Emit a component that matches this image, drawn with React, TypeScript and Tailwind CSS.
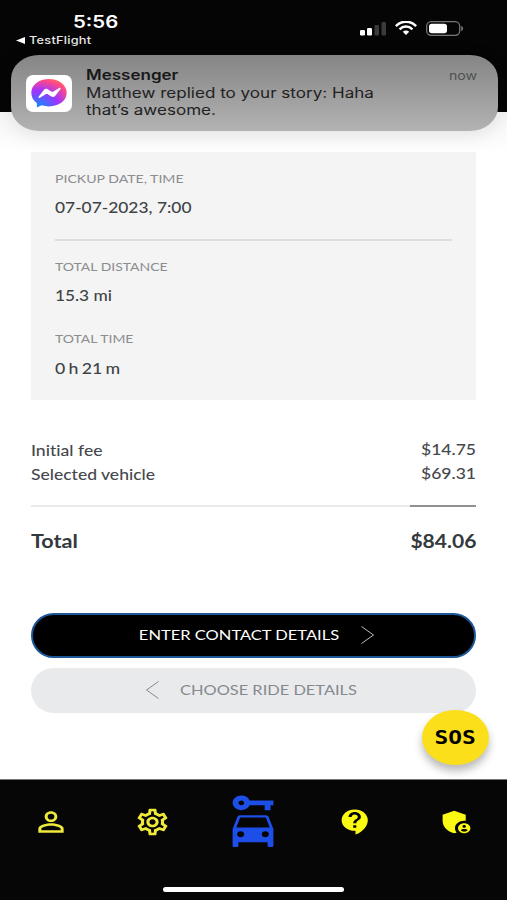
import { ReactNode } from 'react';
import {
  MdAdminPanelSettings,
  MdCarRental,
  MdContactSupport,
  MdOutlineSettings,
  MdPersonOutline,
} from 'react-icons/md';

const Text = ({ className, children }: { className: string; children: ReactNode }) => (
  <span className={`block w-max whitespace-nowrap ${className}`}>{children}</span>
);

function StatusBar() {
  return (
    <div className="flex h-[55px] justify-between pl-4 text-white">
      <div className="pt-[11px]">
        <Text className="ml-[57px] h-[22px] origin-left scale-x-[1.2] text-[17px] leading-[22px] font-semibold">5:56</Text>
        <div className="flex h-[15px] items-center gap-1">
          <svg className="h-[7px] w-[9px]" viewBox="0 0 9 7" fill="currentColor">
            <path d="M0 3.5 9 0v7z" />
          </svg>
          <Text className="origin-left scale-x-[1.16] text-[11px] leading-[15px] font-medium tracking-[0.2px] text-[#e8e8e8]">TestFlight</Text>
        </div>
      </div>
      <div className="flex items-start pt-[21px] pr-[43px]">
        <svg className="mt-px h-[14px] w-[26px]" viewBox="0 0 26 14" fill="white">
          <rect x="0" y="8" width="5" height="5.5" rx="1.2" />
          <rect x="7" y="6" width="5" height="7.5" rx="1.2" />
          <rect x="14.5" y="3" width="4.5" height="10.5" rx="1.2" fill="#3a3a3a" />
          <rect x="21.5" y="0" width="4.5" height="13.5" rx="1.2" fill="#3a3a3a" />
        </svg>
        <svg className="ml-[9px] h-[14px] w-[22px]" viewBox="0 0 22 14" fill="none" stroke="white" strokeWidth="2.5">
          <path d="M.9 5.1C6.5-.7 15.5-.7 21.1 5.1" />
          <path d="M4.6 8.3C8.2 4.7 13.8 4.7 17.4 8.3" />
          <path d="M7.8 10.8C9.7 9 12.3 9 14.2 10.8L11 14z" fill="white" stroke="none" />
        </svg>
        <svg className="ml-[9px] h-[15px] w-[38px]" viewBox="0 0 38 15">
          <rect x=".7" y=".7" width="33" height="13.6" rx="4.5" fill="none" stroke="#777" strokeWidth="1.3" />
          <rect x="3" y="2.7" width="18" height="9.6" rx="2.8" fill="white" />
          <path d="M35.2 5c2.6.8 2.6 4.2 0 5z" fill="#777" />
        </svg>
      </div>
    </div>
  );
}

function Notification() {
  return (
    <div className="absolute top-[55px] left-[10.5px] flex h-[76px] w-[487px] rounded-[28px/24px] bg-linear-to-b from-[#858585] to-[#b3b3b3] pt-[20px] pl-[15.5px] text-[#222] shadow-[0_4px_20px_rgba(0,0,0,0.1)]">
      <svg className="h-[37px] w-[46px]" viewBox="0 0 46 37">
        <defs>
          <radialGradient id="msg" cx=".2" cy="1" r="1.08">
            <stop offset="0" stopColor="#0a8cff" />
            <stop offset=".55" stopColor="#a033ff" />
            <stop offset=".9" stopColor="#ff4a86" />
            <stop offset="1" stopColor="#ff6968" />
          </radialGradient>
        </defs>
        <rect width="46" height="37" rx="7" fill="white" />
        <path d="M23 4C12.8 4 5.3 10 5.3 17.8c0 4.3 2.1 7.9 5.6 10.4v4.3l4.7-2.2c2.2.7 4.7 1.1 7.4 1.1 10.2 0 17.7-5.9 17.7-13.6S33.2 4 23 4z" fill="url(#msg)" />
        <path d="m12.6 21.7 5.4-7c.9-1.1 2.5-1.3 3.7-.5l4 2.5c.4.2.9.2 1.3 0l6.2-3.7c.8-.5 1.9.3 1.3 1.1l-5.4 7c-.9 1.1-2.5 1.3-3.7.5l-4-2.5a1.3 1.3 0 0 0-1.3 0l-6.2 3.7c-.8.5-1.9-.3-1.3-1.1z" fill="white" />
      </svg>
      <div className="-mt-[9px] ml-[14px] flex-1 text-[14px] leading-[17.5px]">
        <Text className="origin-left scale-x-[1.215] font-semibold text-[#181818]">Messenger</Text>
        <Text className="origin-left scale-x-[1.218]">Matthew replied to your story: Haha</Text>
        <Text className="origin-left scale-x-[1.218]">that’s awesome.</Text>
      </div>
      <Text className="mt-[-8px] mr-[25px] origin-left scale-x-[1.18] text-[12px] text-[#505050]">now</Text>
    </div>
  );
}

function RideSummary() {
  return (
    <div className="mt-10 h-[248px] bg-[#f4f4f4] px-6 pt-[18px] text-[#3f4447]">
      <Text className="h-[18px] origin-left scale-x-[1.175] text-[12px] leading-[18px] text-[#8b8d90]">PICKUP DATE, TIME</Text>
      <Text className="mt-2 h-[22px] origin-left scale-x-[1.158] text-[15px] leading-[22px] font-medium">07-07-2023, 7:00</Text>
      <div className="mt-[21px] h-[2px] bg-[#dcdddf]" />
      <Text className="mt-[17px] h-[18px] origin-left scale-x-[1.165] text-[12px] leading-[18px] text-[#8b8d90]">TOTAL DISTANCE</Text>
      <Text className="mt-2 h-[22px] origin-left scale-x-[1.15] text-[15px] leading-[22px] font-medium">15.3 mi</Text>
      <Text className="mt-[24px] h-[18px] origin-left scale-x-[1.165] text-[12px] leading-[18px] text-[#8b8d90]">TOTAL TIME</Text>
      <Text className="mt-[9px] h-[22px] origin-left scale-x-[1.18] text-[15px] leading-[22px] font-medium [word-spacing:-1px]">0 h 21 m</Text>
    </div>
  );
}

function Prices() {
  return (
    <div className="mt-[38px] text-[15px] leading-6 font-medium text-[#45494d] [font-variant-ligatures:none]">
      <div className="flex justify-between">
        <Text className="origin-left scale-x-[1.17]">Initial fee</Text>
        <Text className="-mt-px origin-right scale-x-[1.17]">$14.75</Text>
      </div>
      <div className="flex justify-between">
        <Text className="origin-left scale-x-[1.168]">Selected vehicle</Text>
        <Text className="-mt-px origin-right scale-x-[1.17]">$69.31</Text>
      </div>
      <div className="mt-[19px] flex h-[2px] bg-[#e9e9e9]">
        <div className="ml-auto w-[66px] bg-[#909090]" />
      </div>
      <div className="mt-[21px] mb-px flex justify-between text-[18px] leading-[26px] font-bold text-[#34393e]">
        <Text className="origin-left scale-x-[1.2]">Total</Text>
        <Text className="origin-right scale-x-[1.17]">$84.06</Text>
      </div>
    </div>
  );
}

function TabBar() {
  return (
    <div className="flex h-[121px] flex-col border-t border-[#777] bg-[#060606] text-[#efea3a]">
      <div className="grid h-[84px] grid-cols-5 place-items-center">
        <MdPersonOutline preserveAspectRatio="none" className="h-[32px] w-[38px]" />
        <MdOutlineSettings preserveAspectRatio="none" className="h-[32px] w-[37px]" />
        <MdCarRental preserveAspectRatio="none" className="h-[59px] w-[70px] text-[#1d4ee8]" />
        <MdContactSupport preserveAspectRatio="none" className="ml-px h-[30px] w-[37px] text-[#fafa13]" />
        <MdAdminPanelSettings preserveAspectRatio="none" className="h-[30px] w-[37px] text-[#fafa13]" />
      </div>
      <div className="mt-[23px] h-[5px] w-[181px] self-center rounded-full bg-white" />
    </div>
  );
}

export default function App() {
  return (
    <div className="relative flex h-[900px] w-[507px] flex-col overflow-hidden bg-white font-['Inter',sans-serif]">
      <div className="h-[112px] shrink-0 bg-[#050505]">
        <StatusBar />
      </div>
      <div className="h-[667px] bg-linear-to-b from-[#f6f6f6] to-white to-[42px] px-[31px] font-['Lato',sans-serif]">
        <RideSummary />
        <Prices />
        <button className="mt-[59px] flex h-[45px] w-full items-center justify-center rounded-full border-2 border-[#1c5797] bg-black pb-[2px] text-white">
          <Text className="ml-[21px] scale-x-[1.178] text-[14px]">ENTER CONTACT DETAILS</Text>
          <svg className="ml-[36px] h-[18px] w-[13px]" viewBox="0 0 13 18" fill="none" stroke="#bbb">
            <path d="m.5.5 12 8.5-12 8.5" />
          </svg>
        </button>
        <button className="mt-[10px] flex h-[45px] w-full items-center justify-center rounded-full bg-[#e9eaec] pb-[2px] text-[#85898f]">
          <svg className="mr-[34px] h-[18px] w-[13px]" viewBox="0 0 13 18" fill="none" stroke="#888">
            <path d="M12.5.5.5 9l12 8.5" />
          </svg>
          <Text className="mr-[17px] scale-x-[1.172] text-[14px]">CHOOSE RIDE DETAILS</Text>
        </button>
      </div>
      <TabBar />
      <Notification />
      <button className="absolute top-[710px] left-[422px] flex h-[55px] w-[67px] items-center justify-center rounded-[50%] bg-[#fbdf1b] font-['DejaVu_Sans_Mono',monospace] text-[19px] font-bold text-black shadow-[0_6px_9px_rgba(0,0,0,0.28)]">
        <span className="scale-x-[1.2]">SOS</span>
      </button>
    </div>
  );
}
